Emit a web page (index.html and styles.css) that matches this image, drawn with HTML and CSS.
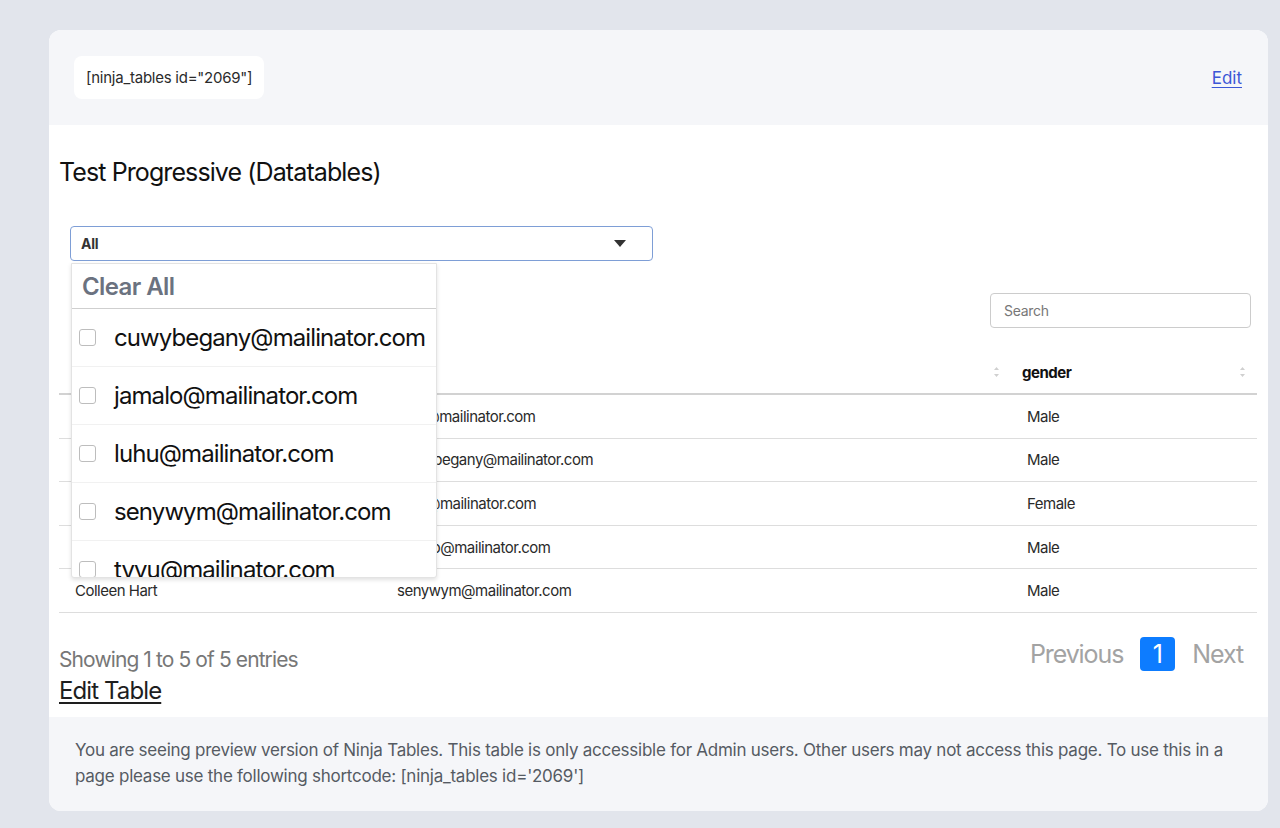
FILE: index.html
```html
<!DOCTYPE html>
<html lang="en">
<head>
  <meta charset="UTF-8">
  <meta name="viewport" content="width=device-width, initial-scale=1.0">
  <title>Test Progressive (Datatables)</title>
  <link rel="stylesheet" href="styles.css">
</head>
<body>
  <div class="card">
    <div class="card-head">
      <div class="shortcode">[ninja_tables id="2069"]</div>
      <a href="#" class="edit-link">Edit</a>
    </div>

    <div class="card-body">
      <h2 class="table-title">Test Progressive (Datatables)</h2>

      <div class="filter-wrap">
        <div class="filter-select">
          <span>All</span>
          <svg class="caret" width="12" height="7" viewBox="0 0 12 7"><path d="M0 0h12L6 7z" fill="#333"/></svg>
        </div>

        <!-- open dropdown of the email filter -->
        <div class="filter-dropdown">
          <div class="clear-all">Clear All</div>
          <label class="option"><span class="check"></span>cuwybegany@mailinator.com</label>
          <label class="option"><span class="check"></span>jamalo@mailinator.com</label>
          <label class="option"><span class="check"></span>luhu@mailinator.com</label>
          <label class="option"><span class="check"></span>senywym@mailinator.com</label>
          <label class="option"><span class="check"></span>tyvu@mailinator.com</label>
        </div>
      </div>

      <div class="search-row">
        <input class="search" type="text" placeholder="Search">
      </div>

      <table class="data-table">
        <colgroup>
          <col class="col-name">
          <col class="col-email">
          <col class="col-gender">
        </colgroup>
        <thead>
          <tr>
            <th class="th-first">name<svg class="sort" width="5" height="10" viewBox="0 0 5 10"><path d="M2.5 0L5 3H0zM2.5 10L0 7h5z" fill="#d0d0d0"/></svg></th>
            <th>email<svg class="sort" width="5" height="10" viewBox="0 0 5 10"><path d="M2.5 0L5 3H0zM2.5 10L0 7h5z" fill="#d0d0d0"/></svg></th>
            <th>gender<svg class="sort" width="5" height="10" viewBox="0 0 5 10"><path d="M2.5 0L5 3H0zM2.5 10L0 7h5z" fill="#d0d0d0"/></svg></th>
          </tr>
        </thead>
        <tbody>
          <tr><td>Hanae Stokes</td><td>luhu@mailinator.com</td><td>Male</td></tr>
          <tr><td>Dylan Pace</td><td>cuwybegany@mailinator.com</td><td>Male</td></tr>
          <tr><td>Iris Vaughn</td><td>tyvu@mailinator.com</td><td>Female</td></tr>
          <tr><td>Keane Frost</td><td>jamalo@mailinator.com</td><td>Male</td></tr>
          <tr><td>Colleen Hart</td><td>senywym@mailinator.com</td><td>Male</td></tr>
        </tbody>
      </table>

      <div class="table-foot">
        <div class="table-info">
          <div class="showing">Showing 1 to 5 of 5 entries</div>
          <a href="#" class="edit-table">Edit Table</a>
        </div>
        <div class="pagination">
          <span class="page-link">Previous</span>
          <span class="page-num">1</span>
          <span class="page-link">Next</span>
        </div>
      </div>
    </div>

    <div class="card-foot">
      You are seeing preview version of Ninja Tables. This table is only accessible for Admin users. Other users may not access this page. To use this in a page please use the following shortcode: [ninja_tables id='2069']
    </div>
  </div>
</body>
</html>
```

FILE: styles.css
```css
body {
  background-color: #E2E5EC;
  margin: 0;
  padding: 30px 12px 0 49px;
  font-family: 'Inter', sans-serif;
  color: #1E1E1E;
}

.card {
  height: 781px;
  border-radius: 12px;
  overflow: hidden;
  background: #FFFFFF;
  display: flex;
  flex-direction: column;
}

.card-head {
  height: 95px;
  flex-shrink: 0;
  background: #F5F6F9;
  display: flex;
  justify-content: space-between;
  align-items: center;
  padding: 0 26px 0 25px;
}

.shortcode {
  height: 43px;
  display: flex;
  align-items: center;
  padding: 0 12px;
  background: #FFFFFF;
  border-radius: 8px;
  font-size: 15px;
  color: #2B2B2B;
  letter-spacing: -0.25px;
}

.edit-link {
  font-size: 17px;
  color: #3C57D6;
  text-decoration: underline;
  text-underline-offset: 3px;
}

.card-body {
  flex: 1;
  padding: 0 11px 0 10px;
}

.table-title {
  margin: 31px 0 0;
  font-size: 25px;
  line-height: 32px;
  font-weight: 400;
  letter-spacing: -0.9px;
  color: #111111;
}

.filter-wrap {
  position: relative;
  margin: 38px 0 0 11px;
  width: 583px;
  z-index: 5;
}

.filter-select {
  height: 35px;
  box-sizing: border-box;
  border: 1px solid #7E9ED6;
  border-radius: 4px;
  display: flex;
  align-items: center;
  justify-content: space-between;
  padding: 0 26px 0 10px;
  font-size: 14px;
  font-weight: 700;
  color: #333333;
  letter-spacing: -0.3px;
}

.filter-dropdown {
  position: absolute;
  top: 37px;
  left: 1px;
  width: 366px;
  height: 315px;
  overflow: hidden;
  background: #FFFFFF;
  border: 1px solid #E3E3E3;
  box-sizing: border-box;
  box-shadow: 0 2px 4px rgba(0, 0, 0, 0.12);
  border-radius: 0 0 3px 3px;
}

.clear-all {
  height: 44px;
  border-bottom: 1px solid #CFCFCF;
  display: flex;
  align-items: center;
  padding-left: 10px;
  font-size: 24px;
  font-weight: 600;
  color: #6B7280;
  letter-spacing: -0.6px;
}

.option {
  height: 58px;
  box-sizing: border-box;
  border-bottom: 1px solid #F1F1F1;
  display: flex;
  align-items: center;
  gap: 18px;
  padding-left: 7px;
  font-size: 24px;
  color: #111111;
  letter-spacing: -0.9px;
}

.check {
  width: 17px;
  height: 17px;
  box-sizing: border-box;
  border: 1px solid #BDBDBD;
  border-radius: 3px;
  background: #FFFFFF;
  flex-shrink: 0;
}

.search-row {
  display: flex;
  justify-content: flex-end;
  margin-top: 32px;
  padding-right: 6px;
}

.search {
  width: 261px;
  height: 35px;
  box-sizing: border-box;
  border: 1px solid #CCCCCC;
  border-radius: 4px;
  padding: 0 13px;
  font-family: 'Inter', sans-serif;
  font-size: 14px;
  letter-spacing: -0.3px;
}

.search::placeholder {
  color: #777777;
}

.data-table {
  width: 100%;
  margin-top: 23px;
  border-collapse: collapse;
  table-layout: fixed;
  font-size: 15px;
  letter-spacing: -0.5px;
}

.col-name {
  width: 322px;
}

.col-email {
  width: 630px;
}

.data-table th {
  height: 42px;
  text-align: left;
  padding: 0 11px;
  font-weight: 700;
  color: #111111;
  border-bottom: 2px solid #D2D2D2;
  position: relative;
}

.data-table .th-first {
  padding-left: 20px;
}

.sort {
  position: absolute;
  right: 12px;
  top: 16px;
}

.data-table td {
  height: 42.6px;
  padding: 0 16px;
  border-bottom: 1px solid #DDDDDD;
  color: #2A2A2A;
}

.table-foot {
  display: flex;
  justify-content: space-between;
  align-items: flex-start;
  margin-top: 24px;
}

.table-info {
  padding-top: 9px;
}

.showing {
  font-size: 21px;
  line-height: 28px;
  color: #777777;
  letter-spacing: -0.9px;
}

.edit-table {
  display: inline-block;
  margin-top: 3px;
  font-size: 24px;
  line-height: 28px;
  color: #1E1E1E;
  letter-spacing: -0.9px;
  text-underline-offset: 3px;
}

.pagination {
  display: flex;
  align-items: center;
  gap: 17px;
  padding-right: 14px;
}

.page-link {
  font-size: 25px;
  color: #A3A3A3;
  letter-spacing: -1.1px;
}

.page-num {
  width: 35px;
  height: 34px;
  border-radius: 4px;
  background: #0D7CFF;
  color: #FFFFFF;
  font-size: 25px;
  display: flex;
  align-items: center;
  justify-content: center;
}

.card-foot {
  flex-shrink: 0;
  background: #F5F6F9;
  padding: 20px 30px 22px 26px;
  font-size: 17px;
  line-height: 26px;
  color: #555B63;
  letter-spacing: -0.25px;
}
```
